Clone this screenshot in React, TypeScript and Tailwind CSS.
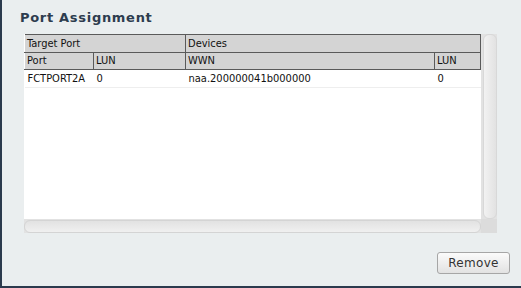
const hdr =
  "border-r border-b border-[#5a5a5a] border-l border-l-white/70 bg-[#d4d4d4] px-[2px] text-left font-normal text-[#111]";

export default function App() {
  return (
    <div className="flex h-[288px] w-[521px] flex-col border-b-2 border-l-2 border-[#2b3a4d] bg-[#eaeeef] font-['DejaVu_Sans',sans-serif]">
      <h2 className="pl-[18px] pt-[10px] text-[13px] font-bold leading-[16px] tracking-[0.7px] text-[#2d3c4e]">
        Port Assignment
      </h2>

      <div className="ml-[22px] mt-[8px] grid h-[199px] w-[473px] grid-cols-[457px_16px] grid-rows-[185px_14px]">
        <div className="overflow-hidden bg-white">
          <table className="w-[456px] table-fixed border-collapse font-['DejaVu_Sans_Condensed','DejaVu_Sans',sans-serif] text-[11px] leading-[16px]">
            <colgroup>
              <col className="w-[69px]" />
              <col className="w-[92px]" />
              <col className="w-[249px]" />
              <col className="w-[46px]" />
            </colgroup>
            <thead>
              <tr className="h-[18px] border-t border-[#5a5a5a]">
                <th colSpan={2} className={hdr}>
                  Target Port
                </th>
                <th colSpan={2} className={hdr}>
                  Devices
                </th>
              </tr>
              <tr className="h-[17px]">
                <th className={hdr}>Port</th>
                <th className={hdr}>LUN</th>
                <th className={hdr}>WWN</th>
                <th className={hdr}>LUN</th>
              </tr>
            </thead>
            <tbody>
              <tr className="h-[18px] border-b border-[#eeeeee] text-[#111]">
                <td className="px-[3px]">FCTPORT2A</td>
                <td className="px-[3px]">0</td>
                <td className="px-[3px]">naa.200000041b000000</td>
                <td className="px-[3px]">0</td>
              </tr>
            </tbody>
          </table>
        </div>

        <div className="bg-[#e2e2e2] pl-[2px]">
          <div className="h-full w-[14px] rounded-[6px] border border-[#d8d8d8] bg-gradient-to-r from-[#f2f2f2] to-[#e2e2e2]" />
        </div>

        <div className="bg-[#e2e2e2] pt-[1px]">
          <div className="h-[13px] w-full rounded-[6px] border border-[#d4d4d4] bg-gradient-to-b from-[#e2e2e2] to-[#f0f0f0]" />
        </div>
        <div className="bg-[#dcdcdc]" />
      </div>

      <div className="mt-[19px] flex justify-end pr-[11px]">
        <button className="h-[22px] w-[73px] rounded-[3px] border border-[#a6a6a6] bg-gradient-to-b from-[#fbfbfb] to-[#e2e2e2] text-[12px] leading-[18px] tracking-[0.3px] text-[#333]">
          Remove
        </button>
      </div>
    </div>
  );
}
